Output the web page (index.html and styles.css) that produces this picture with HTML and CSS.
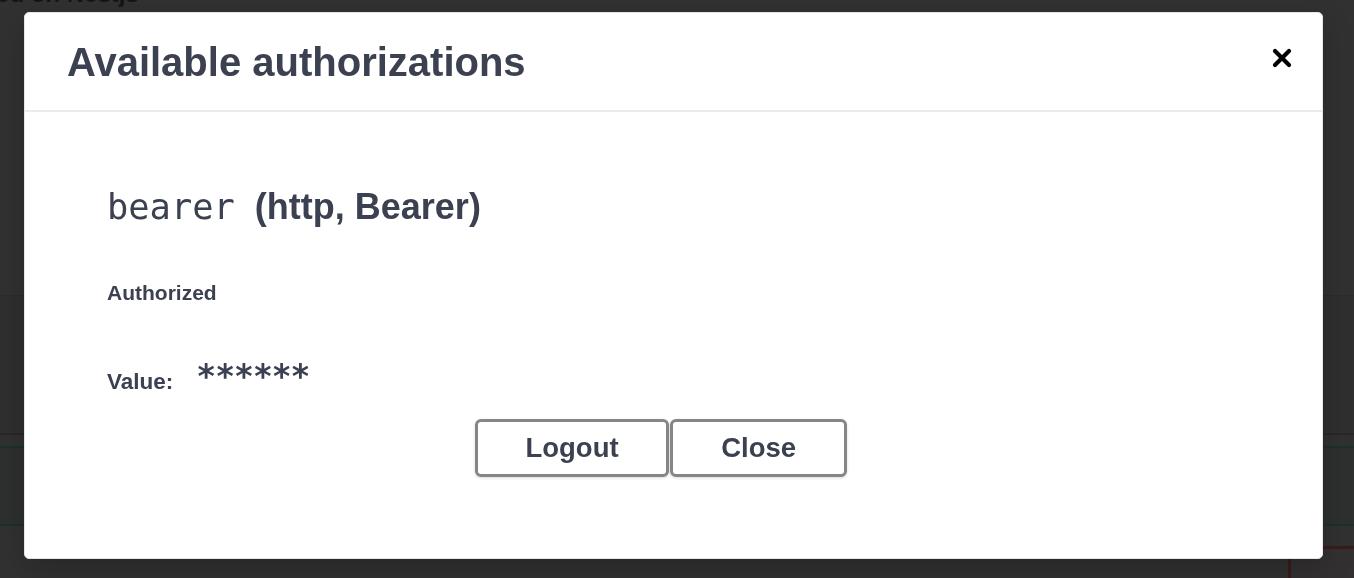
FILE: index.html
```html
<!DOCTYPE html>
<html lang="en">
<head>
<meta charset="utf-8">
<title>Available authorizations</title>
<link rel="stylesheet" href="styles.css">
</head>
<body>
<div class="page">
  <div class="page-head"><span class="page-title">API based on Nestjs</span></div>
  <div class="band-info"></div>
  <div class="band-post"></div>
  <div class="band-delete-row"><div class="band-delete"></div></div>
</div>
<div class="backdrop">
  <div class="modal">
    <div class="modal-header">
      <h3 class="modal-title">Available authorizations</h3>
      <button class="close-x" type="button" aria-label="Close">
        <svg width="20" height="20" viewBox="0 0 20 20"><path d="M3 3 L17 17 M17 3 L3 17" stroke="#000" stroke-width="4.2" stroke-linecap="round" fill="none"/></svg>
      </button>
    </div>
    <div class="modal-body">
      <h4 class="scheme"><code class="scheme-name">bearer</code><span class="scheme-type">(http, Bearer)</span></h4>
      <h6 class="status">Authorized</h6>
      <div class="value-row"><span class="value-label">Value:</span><code class="value-mask">******</code></div>
      <div class="btn-row">
        <button class="btn" type="button">Logout</button>
        <button class="btn btn-done" type="button">Close</button>
      </div>
    </div>
  </div>
</div>
</body>
</html>
```
FILE: styles.css
```css
* { box-sizing: border-box; }
html, body { margin: 0; padding: 0; }
body {
  background: #313131;
  font-family: "Liberation Sans", Arial, sans-serif;
  width: 1354px;
  height: 578px;
  overflow: hidden;
}
.page { display: flex; flex-direction: column; }
.page-head { height: 295px; overflow: hidden; }
.page-title {
  display: block;
  margin-top: -18px;
  margin-left: -92px;
  font-size: 24px;
  font-weight: bold;
  color: #141518;
  line-height: 24px;
}
.band-info {
  height: 140px;
  background: #2f2f2f;
  border-top: 1px solid #2b2b2b;
  border-bottom: 2px solid #282828;
}
.band-post {
  margin-top: 11px;
  height: 80px;
  background: #2d302e;
  border-top: 2px solid #1c3325;
  border-bottom: 2px solid #1c3325;
}
.band-delete-row { display: flex; justify-content: flex-end; margin-top: 20px; }
.band-delete {
  width: 66px;
  height: 40px;
  border-top: 3px solid #3a1b1b;
  border-left: 3px solid #3a1b1b;
  background: #323030;
}
.backdrop {
  position: fixed;
  inset: 0;
  padding: 12px 31px 0 24px;
}
.modal {
  height: 547px;
  background: #fff;
  border-radius: 5px;
  border: 1px solid #e6e6e6;
  box-shadow: 0 10px 30px rgba(0,0,0,.2);
  display: flex;
  flex-direction: column;
}
.modal-header {
  height: 99px;
  flex: none;
  display: flex;
  align-items: center;
  justify-content: space-between;
  padding: 0 30px 0 42px;
  border-bottom: 2px solid #ebebeb;
}
.modal-title {
  margin: 0;
  font-size: 40px;
  line-height: 46px;
  font-weight: bold;
  color: #3b4151;
}
.close-x {
  border: 0;
  background: none;
  padding: 0;
  margin-bottom: 7px;
  width: 20px;
  height: 20px;
  display: flex;
}
.modal-body {
  padding: 0 0 0 82px;
  display: flex;
  flex-direction: column;
  color: #3b4151;
}
.scheme {
  margin: 73px 0 0;
  display: flex;
  align-items: baseline;
  line-height: 44px;
  font-weight: bold;
}
.scheme-name {
  font-family: "DejaVu Sans Mono", monospace;
  font-weight: normal;
  font-size: 35.4px;
  margin-right: 20px;
}
.scheme-type { font-size: 36px; }
.status {
  margin: 52px 0 0;
  font-size: 21px;
  line-height: 24px;
  font-weight: bold;
}
.value-row {
  margin-top: 59px;
  display: flex;
  align-items: baseline;
  line-height: 28px;
}
.value-label { font-size: 22.5px; font-weight: bold; }
.value-mask {
  position: relative;
  top: -1px;
  font-family: "DejaVu Sans Mono", monospace;
  font-weight: bold;
  font-size: 33px;
  letter-spacing: -1px;
  margin-left: 23px;
}
.btn-row {
  display: flex;
  justify-content: center;
  gap: 1px;
  margin-top: 23px;
  padding-right: 107px;
}
.btn {
  font-family: "Liberation Sans", Arial, sans-serif;
  font-weight: bold;
  font-size: 27.5px;
  color: #3b4151;
  background: #fff;
  border: 3px solid #868686;
  border-radius: 6px;
  height: 58px;
  padding: 0 47.5px;
  box-shadow: 0 1px 3px rgba(0,0,0,.15);
}
.btn-done { padding: 0 48px; }
```
